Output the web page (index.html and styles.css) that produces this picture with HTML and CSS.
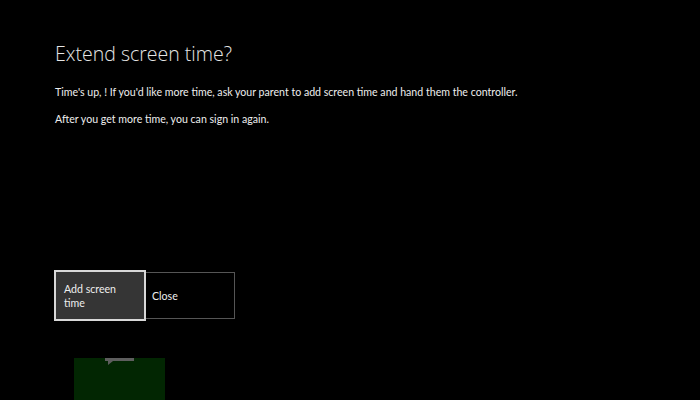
FILE: index.html
```html
<!DOCTYPE html>
<html>
<head>
<meta charset="utf-8">
<link rel="stylesheet" href="styles.css">
</head>
<body>
<div class="page">
  <h1 class="title">Extend screen time?</h1>
  <p class="msg first">Time's up, ! If you'd like more time, ask your parent to add screen time and hand them the controller.</p>
  <p class="msg second">After you get more time, you can sign in again.</p>
  <div class="buttons">
    <button class="btn primary">Add screen<br>time</button>
    <button class="btn secondary">Close</button>
  </div>
  <div class="tile">
    <div class="bubble"></div>
  </div>
</div>
</body>
</html>
```
FILE: styles.css
```css
html, body {
  margin: 0;
  padding: 0;
  background: #000;
  width: 700px;
  height: 400px;
  overflow: hidden;
}
.page {
  padding: 42px 0 0 55px;
  font-family: "Lato", "Liberation Sans", sans-serif;
  color: #eee;
  display: flex;
  flex-direction: column;
  align-items: flex-start;
}
.title {
  margin: 0;
  font-family: "Open Sans", "Liberation Sans", sans-serif;
  font-weight: 300;
  font-size: 19.5px;
  line-height: 24px;
  color: #e6e6e6;
}
.msg {
  margin: 0;
  font-size: 10.6px;
  line-height: 14px;
  color: #eee;
}
.msg.first { margin-top: 18.5px; }
.msg.second { margin-top: 13.5px; }
.buttons {
  display: flex;
  margin-top: 144px;
  margin-left: -1px;
  align-items: center;
}
.btn {
  font-family: "Lato", "Liberation Sans", sans-serif;
  font-size: 10.6px;
  line-height: 14px;
  color: #eee;
  text-align: left;
  margin: 0;
  box-sizing: border-box;
}
.primary {
  width: 92px;
  height: 51px;
  background: #353535;
  border: 2px solid #d8d8d8;
  padding: 0 0 0 8px;
}
.secondary {
  width: 89px;
  height: 47px;
  background: #000;
  border: 1px solid #555;
  border-left: none;
  padding: 1px 0 0 6px;
}
.tile {
  margin-top: 37px;
  margin-left: 19px;
  width: 91px;
  height: 42px;
  background: #022602;
  position: relative;
}
.bubble {
  position: absolute;
  left: 31px;
  top: 0;
  width: 29px;
  height: 3px;
  background: #5e5e5e;
}
.bubble::after {
  content: "";
  position: absolute;
  left: 3px;
  top: 3px;
  border-left: 5px solid #5e5e5e;
  border-bottom: 4px solid transparent;
}
```
